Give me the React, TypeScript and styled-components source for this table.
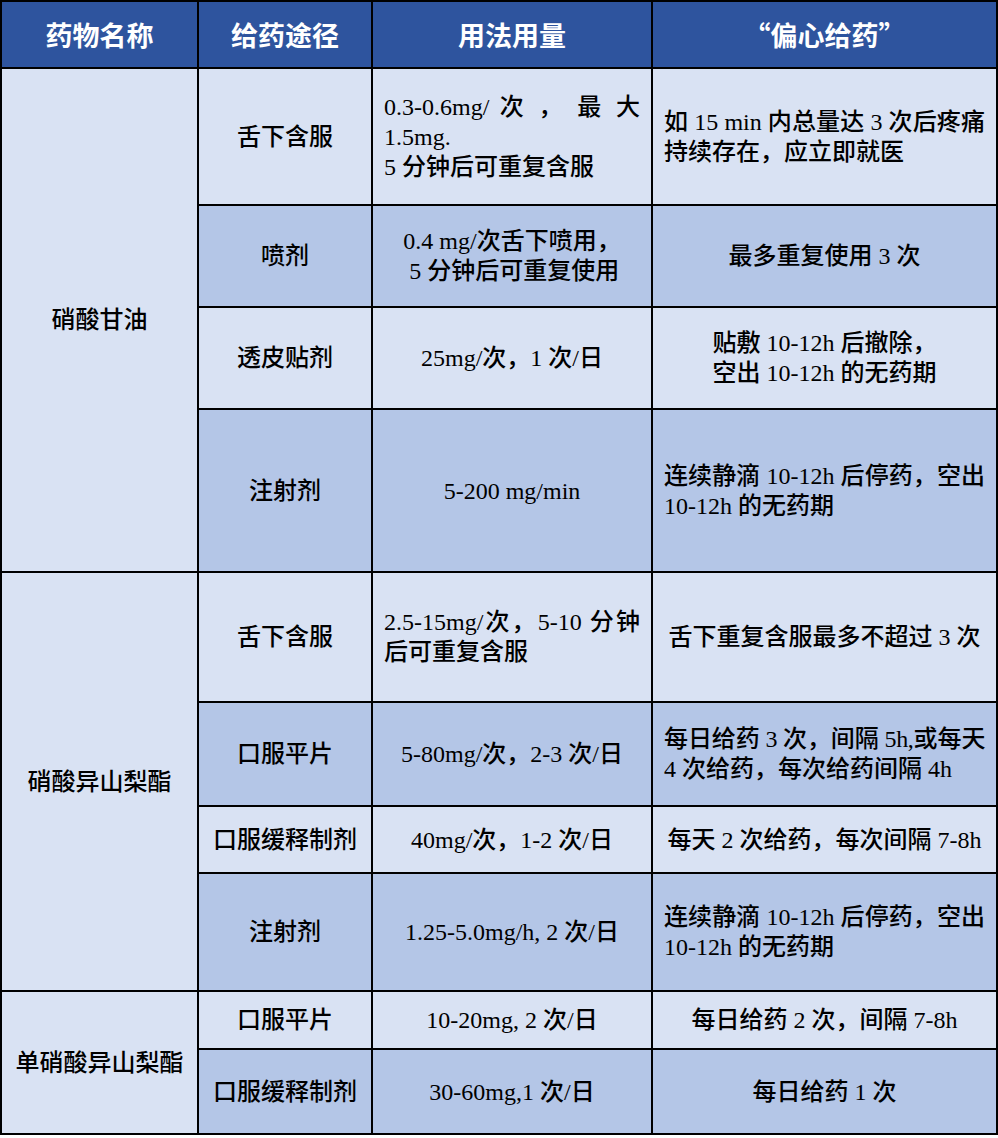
import React from 'react';
import styled, { createGlobalStyle } from 'styled-components';

type Tone = 'head' | 'light' | 'dark';
type Align = 'center' | 'left' | 'block';

interface CellSpec {
  lines: string[];
  align?: Align;
  justify?: boolean;
  tight?: boolean;
}

interface RowSpec {
  route: string;
  dose: CellSpec;
  note: CellSpec;
}

interface GroupSpec {
  drug: string;
  rows: RowSpec[];
}

const GlobalStyle = createGlobalStyle`
  html, body {
    margin: 0;
    padding: 0;
    background: #ffffff;
  }
`;

const Table = styled.div`
  display: grid;
  width: 998px;
  box-sizing: border-box;
  padding: 2px;
  gap: 2px;
  background: #000000;
  grid-template-columns: 195px 172px 278px 343px;
  grid-template-rows: 65px 135px 100px 100px 161px 128px 102px 65px 116px 56px 83px;
`;

const toneColor: Record<Tone, string> = {
  head: '#2e549e',
  light: '#d9e2f3',
  dark: '#b4c6e7',
};

const HeadCell = styled.div`
  display: flex;
  align-items: center;
  justify-content: center;
  background: ${toneColor.head};
  color: #ffffff;
  font-family: 'Noto Sans CJK SC', sans-serif;
  font-weight: 700;
  font-size: 27px;
`;

const Cell = styled.div<{ $tone: Tone; $align: Align; $span?: number }>`
  display: flex;
  align-items: center;
  justify-content: ${(p) => (p.$align === 'left' ? 'flex-start' : 'center')};
  box-sizing: border-box;
  padding: 0 11px;
  background: ${(p) => toneColor[p.$tone]};
  color: #000000;
  font-family: 'Liberation Serif', 'Noto Sans CJK SC', serif;
  font-weight: 500;
  font-size: 24px;
  line-height: 30px;
  ${(p) => (p.$span ? `grid-row: span ${p.$span};` : '')}
`;

const Text = styled.div<{ $align: Align }>`
  width: ${(p) => (p.$align === 'left' ? '100%' : 'auto')};
  text-align: ${(p) => (p.$align === 'center' ? 'center' : 'left')};
  white-space: pre-wrap;
`;

const Line = styled.div<{ $justify?: boolean; $tight?: boolean }>`
  ${(p) =>
    p.$justify
      ? `text-align: justify; text-align-last: justify; white-space: nowrap;`
      : ''}
  ${(p) => (p.$tight ? `letter-spacing: -0.45px;` : '')}
`;

const headers = ['药物名称', '给药途径', '用法用量', '“偏心给药”'];

const c = (
  lines: string[],
  align: Align = 'center',
  justify = false,
  tight = false
): CellSpec => ({
  lines,
  align,
  justify,
  tight,
});

const groups: GroupSpec[] = [
  {
    drug: '硝酸甘油',
    rows: [
      {
        route: '舌下含服',
        dose: c(['0.3-0.6mg/ 次 ， 最 大', '1.5mg.', '5 分钟后可重复含服'], 'left', true),
        note: c(['如 15 min 内总量达 3 次后疼痛', '持续存在，应立即就医'], 'left', true),
      },
      {
        route: '喷剂',
        dose: c(['0.4 mg/次舌下喷用，', ' 5 分钟后可重复使用'], 'block'),
        note: c(['最多重复使用 3 次']),
      },
      {
        route: '透皮贴剂',
        dose: c(['25mg/次，1 次/日']),
        note: c(['贴敷 10-12h 后撤除，', '空出 10-12h 的无药期'], 'block'),
      },
      {
        route: '注射剂',
        dose: c(['5-200 mg/min']),
        note: c(['连续静滴 10-12h 后停药，空出', '10-12h 的无药期'], 'left', true),
      },
    ],
  },
  {
    drug: '硝酸异山梨酯',
    rows: [
      {
        route: '舌下含服',
        dose: c(['2.5-15mg/次，5-10 分钟', '后可重复含服'], 'left', true),
        note: c(['舌下重复含服最多不超过 3 次']),
      },
      {
        route: '口服平片',
        dose: c(['5-80mg/次，2-3 次/日']),
        note: c(
          ['每日给药 3 次，间隔 5h,或每天', '4 次给药，每次给药间隔 4h'],
          'left',
          true,
          true
        ),
      },
      {
        route: '口服缓释制剂',
        dose: c(['40mg/次，1-2 次/日']),
        note: c(['每天 2 次给药，每次间隔 7-8h']),
      },
      {
        route: '注射剂',
        dose: c(['1.25-5.0mg/h, 2 次/日']),
        note: c(['连续静滴 10-12h 后停药，空出', '10-12h 的无药期'], 'left', true),
      },
    ],
  },
  {
    drug: '单硝酸异山梨酯',
    rows: [
      {
        route: '口服平片',
        dose: c(['10-20mg, 2 次/日']),
        note: c(['每日给药 2 次，间隔 7-8h']),
      },
      {
        route: '口服缓释制剂',
        dose: c(['30-60mg,1 次/日']),
        note: c(['每日给药 1 次']),
      },
    ],
  },
];

const SpecCell: React.FC<{ spec: CellSpec; tone: Tone }> = ({ spec, tone }) => {
  const align = spec.align || 'center';
  return (
    <Cell $tone={tone} $align={align}>
      <Text $align={align}>
        {spec.lines.map((line, i) => {
          const last = i === spec.lines.length - 1;
          return (
            <Line key={i} $justify={spec.justify && !last} $tight={spec.tight && !last}>
              {line}
            </Line>
          );
        })}
      </Text>
    </Cell>
  );
};

export default function App() {
  let rowIndex = 0;
  return (
    <>
      <GlobalStyle />
      <Table>
        {headers.map((h) => (
          <HeadCell key={h}>{h}</HeadCell>
        ))}
        {groups.map((g) =>
          g.rows.map((r, i) => {
            const tone: Tone = rowIndex++ % 2 === 0 ? 'light' : 'dark';
            return (
              <React.Fragment key={g.drug + i}>
                {i === 0 && (
                  <Cell $tone="light" $align="center" $span={g.rows.length}>
                    <Text $align="center">{g.drug}</Text>
                  </Cell>
                )}
                <Cell $tone={tone} $align="center">
                  <Text $align="center">{r.route}</Text>
                </Cell>
                <SpecCell spec={r.dose} tone={tone} />
                <SpecCell spec={r.note} tone={tone} />
              </React.Fragment>
            );
          })
        )}
      </Table>
    </>
  );
}
